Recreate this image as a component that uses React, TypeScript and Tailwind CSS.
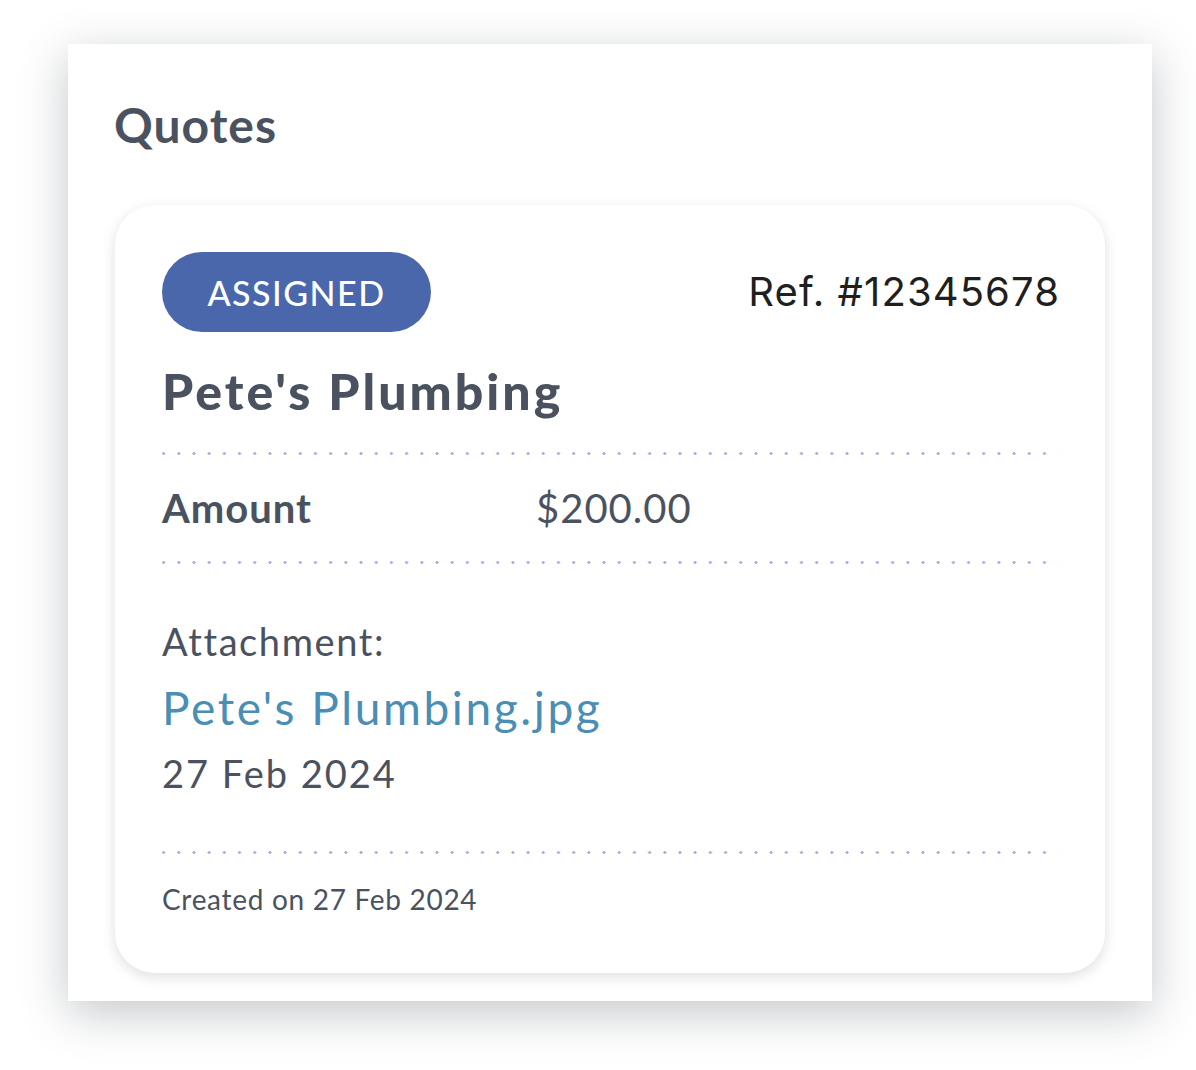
import React from 'react';

const Dots: React.FC = () => (
  <div className="h-[3px] w-full bg-[radial-gradient(circle,#aeb0e4_1.4px,transparent_1.6px)] bg-[length:15.2px_3px] bg-[position:-6px_0] bg-repeat-x" />
);

const App: React.FC = () => {
  return (
    <div className="min-h-screen w-full bg-white pt-[44px] pl-[68px]" style={{ fontFamily: 'Lato, "Noto Sans", sans-serif' }}>
      <div className="w-[1084px] h-[957px] bg-white shadow-[0_12px_44px_rgba(70,80,90,0.32)] px-[47px] pt-[52px]">
        <h1 className="text-[48px] leading-[58px] font-bold tracking-[1px] text-[#4a5260] -ml-[1px]">Quotes</h1>

        <div className="mt-[51px] rounded-[40px] bg-white shadow-[0_4px_14px_rgba(0,0,0,0.13)] px-[47px] pt-[47px] pb-[57px]">
          {/* header row */}
          <div className="flex items-center justify-between">
            <span className="flex h-[80px] w-[269px] items-center justify-center rounded-full bg-[#4a67ab] text-[34px] font-medium tracking-[1.5px] text-white">
              ASSIGNED
            </span>
            <span className="text-[40px] tracking-[1.1px] text-[#1f1f1f] -mr-[2px]" style={{ fontFamily: 'Inter, "Liberation Sans", sans-serif' }}>
              Ref. #12345678
            </span>
          </div>

          <h2 className="mt-[29px] text-[50px] leading-[60px] font-black tracking-[3px] text-[#4a5260]">Pete's Plumbing</h2>

          <div className="mt-[31px]"><Dots /></div>

          <div className="mt-[29px] flex items-center text-[40px] leading-[48px] tracking-[1px] text-[#4a5260]">
            <span className="w-[374px] font-bold">Amount</span>
            <span>$200.00</span>
          </div>

          <div className="mt-[29px]"><Dots /></div>

          <div className="mt-[54px] text-[38px] leading-[46px] tracking-[1.6px] text-[#4a5260]">Attachment:</div>
          <a className="mt-[16px] block text-[46px] leading-[55px] tracking-[2.6px] text-[#4a8db5]">Pete's Plumbing.jpg</a>
          <div className="mt-[15px] text-[38px] leading-[46px] tracking-[2px] text-[#4a5260]">27 Feb 2024</div>

          <div className="mt-[55px]"><Dots /></div>

          <div className="mt-[28px] text-[28px] leading-[34px] tracking-[0.7px] text-[#4a5260]">Created on 27 Feb 2024</div>
        </div>
      </div>
    </div>
  );
};

export default App;
